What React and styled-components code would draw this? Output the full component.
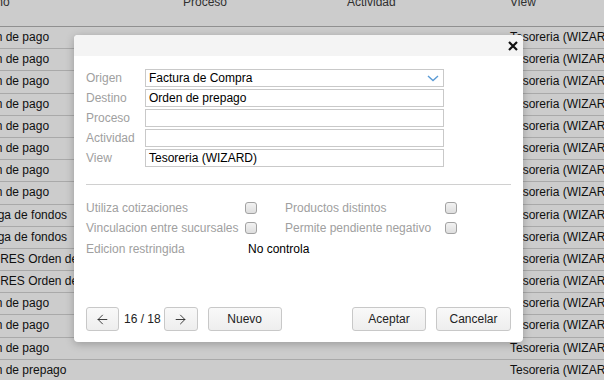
import React from "react";
import styled, { createGlobalStyle } from "styled-components";
import { ArrowLeft, ArrowRight } from "lucide-react";

const GlobalStyle = createGlobalStyle`
  html, body {
    margin: 0;
    padding: 0;
  }
  body {
    font-family: "Liberation Sans", Arial, sans-serif;
    font-size: 12px;
    background: #fff;
    overflow: hidden;
  }
`;

const rows = [
  ...Array(8).fill("Orden de pago"),
  "Entrega de fondos",
  "Entrega de fondos",
  "VALORES Orden de pago",
  "VALORES Orden de pago",
  "Orden de pago",
  "Orden de pago",
  "Orden de pago",
  "Orden de prepago",
];

function App() {
  return (
    <Page>
      <GlobalStyle />
      <Table>
        <HeadCell>Destino</HeadCell>
        <HeadCell>Proceso</HeadCell>
        <HeadCell>Actividad</HeadCell>
        <HeadCell>View</HeadCell>
        {rows.map((r, i) => (
          <React.Fragment key={i}>
            <Cell>{r}</Cell>
            <Cell></Cell>
            <Cell></Cell>
            <Cell>Tesoreria (WIZARD)</Cell>
          </React.Fragment>
        ))}
      </Table>

      <Backdrop />

      <Modal>
        <ModalHeader>
          <Close>
            <svg width="10" height="10" viewBox="0 0 10 10">
              <path d="M1 1L9 9M9 1L1 9" stroke="#111" strokeWidth="2.2" />
            </svg>
          </Close>
        </ModalHeader>
        <Body>
          <Fields>
            <Label>Origen</Label>
            <Input>
              Factura de Compra
              <Chevron>
                <svg width="12" height="7" viewBox="0 0 12 7">
                  <path d="M1 1L6 5.5L11 1" fill="none" stroke="#5b9bd5" strokeWidth="1.4" />
                </svg>
              </Chevron>
            </Input>
            <Label>Destino</Label>
            <Input>Orden de prepago</Input>
            <Label>Proceso</Label>
            <Input />
            <Label>Actividad</Label>
            <Input />
            <Label>View</Label>
            <Input>Tesoreria (WIZARD)</Input>
          </Fields>

          <Separator />

          <Options>
            <Label>Utiliza cotizaciones</Label>
            <Check />
            <span />
            <Label>Productos distintos</Label>
            <Check />

            <Label>Vinculacion entre sucursales</Label>
            <Check />
            <span />
            <Label>Permite pendiente negativo</Label>
            <Check />

            <Label>Edicion restringida</Label>
            <Value>No controla</Value>
          </Options>

          <Footer>
            <Button $w={33}>
              <ArrowLeft size={15} strokeWidth={1.4} />
            </Button>
            <Counter>16 / 18</Counter>
            <Button $w={34}>
              <ArrowRight size={15} strokeWidth={1.4} />
            </Button>
            <Button $w={74} style={{ marginLeft: 10 }}>Nuevo</Button>
            <Spacer />
            <Button $w={74}>Aceptar</Button>
            <Button $w={75} style={{ marginLeft: 10 }}>Cancelar</Button>
          </Footer>
        </Body>
      </Modal>
    </Page>
  );
}

export default App;

const Page = styled.div`
  width: 604px;
  height: 380px;
  overflow: hidden;
  position: relative;
`;

const Table = styled.div`
  display: grid;
  grid-template-columns: 214px 164px 163px 220px;
  margin-left: -35px;
  margin-top: -14px;
`;

const HeadCell = styled.div`
  box-sizing: border-box;
  height: 41px;
  padding: 9px 4px 0;
  line-height: 14px;
  color: #3c3c3c;
  border-bottom: 1px solid #b4b4b4;
  white-space: nowrap;
  overflow: hidden;
`;

const Cell = styled.div`
  box-sizing: border-box;
  height: 22.2px;
  padding: 0 4px;
  line-height: 21px;
  color: #141414;
  border-bottom: 1px solid #d4d4d4;
  white-space: nowrap;
  overflow: hidden;
`;

const Backdrop = styled.div`
  position: absolute;
  inset: 0;
  background: rgba(0, 0, 0, 0.2);
`;

const Modal = styled.div`
  position: absolute;
  left: 74px;
  top: 35px;
  width: 449px;
  height: 307px;
  background: #fff;
  border-radius: 4px;
  box-shadow: 0 2px 8px rgba(0, 0, 0, 0.25);
  display: flex;
  flex-direction: column;
  overflow: hidden;
`;

const ModalHeader = styled.div`
  height: 21px;
  background: #f4f4f4;
  display: flex;
  align-items: center;
  justify-content: flex-end;
  padding-right: 5px;
`;

const Close = styled.div`
  width: 10px;
  height: 10px;
  display: flex;
  cursor: pointer;
`;

const Body = styled.div`
  flex: 1;
  display: flex;
  flex-direction: column;
  padding: 13px 12px 11px;
`;

const Fields = styled.div`
  display: grid;
  grid-template-columns: 59px 299px;
  row-gap: 2px;
`;

const Label = styled.div`
  color: #a0a0a0;
  line-height: 18px;
  white-space: nowrap;
`;

const Input = styled.div`
  position: relative;
  box-sizing: border-box;
  height: 18px;
  border: 1px solid #c9c9c9;
  padding: 0 3px;
  line-height: 16px;
  color: #000;
`;

const Chevron = styled.span`
  position: absolute;
  right: 4px;
  top: 5px;
  display: flex;
`;

const Separator = styled.div`
  margin-top: 17px;
  border-top: 1px solid #d0d0d0;
`;

const Options = styled.div`
  margin-top: 13px;
  display: grid;
  grid-template-columns: 159px 12px 28px 160px 12px;
  grid-template-rows: 20px 20px 22px;
  align-items: center;
`;

const Check = styled.div`
  box-sizing: border-box;
  width: 12px;
  height: 12px;
  border: 1px solid #a2a2a2;
  border-radius: 3px;
  background: linear-gradient(#f2f2f2, #dedede);
`;

const Value = styled.div`
  grid-column: 2 / span 4;
  padding-left: 3px;
  color: #000;
  white-space: nowrap;
`;

const Footer = styled.div`
  margin-top: auto;
  display: flex;
  align-items: center;
`;

const Button = styled.button`
  box-sizing: border-box;
  width: ${(p) => p.$w}px;
  height: 24px;
  padding: 0;
  display: flex;
  align-items: center;
  justify-content: center;
  font-family: "Liberation Sans", Arial, sans-serif;
  font-size: 12px;
  color: #222;
  background: linear-gradient(#f9f9f9, #eeeeee);
  border: 1px solid #c8c8c8;
  border-radius: 3px;
  cursor: pointer;
`;

const Counter = styled.span`
  margin: 0 3px 0 5px;
  color: #222;
  white-space: nowrap;
`;

const Spacer = styled.div`
  flex: 1;
`;
